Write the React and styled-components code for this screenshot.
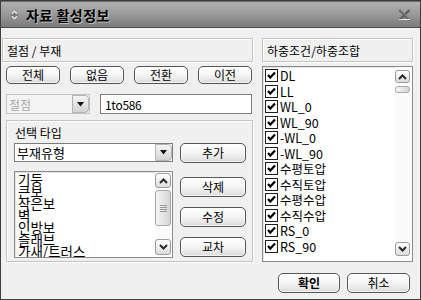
import React from 'react';
import styled, { createGlobalStyle } from 'styled-components';

const Global = createGlobalStyle`
  html, body {
    margin: 0;
    padding: 0;
    background: #f0f0f0;
  }
  body {
    font-family: "Noto Sans CJK KR", "Liberation Sans", sans-serif;
    font-size: 12px;
    color: #000;
  }
`;

const Window = styled.div`
  width: 421px;
  height: 300px;
  box-sizing: border-box;
  border: 1px solid #3e3e3e;
  background: #f0f0f0;
  display: flex;
  flex-direction: column;
  overflow: hidden;
`;

const TitleBar = styled.div`
  height: 27px;
  flex: 0 0 27px;
  box-sizing: border-box;
  border-top: 1px solid #6a6a6a;
  border-bottom: 1px solid #4c4c4c;
  background: linear-gradient(#b0b0b0, #9c9c9c 45%, #868686 80%, #7c7c7c);
  display: flex;
  align-items: center;
  padding: 0 9px 0 9px;
`;

const Title = styled.div`
  margin-left: 7px;
  font-weight: 700;
  font-size: 14px;
  letter-spacing: 0.5px;
  color: #000;
  text-shadow: 1px 1px 0 rgba(255, 255, 255, 0.45);
  flex: 1;
`;

const Body = styled.div`
  flex: 1;
  display: flex;
  padding: 10px 6px 0 1px;
  gap: 9px;
`;

const LeftCol = styled.div`
  width: 251px;
  display: flex;
  flex-direction: column;
`;

const RightCol = styled.div`
  width: 151px;
  display: flex;
  flex-direction: column;
`;

const Header = styled.div`
  height: 24px;
  box-sizing: border-box;
  border: 1px solid #c4c4bc;
  box-shadow: inset 1px 1px 0 #ffffff, 1px 1px 0 #ffffff;
  display: flex;
  align-items: center;
  padding-left: 4px;
  font-size: 12px;
`;

const ButtonRow = styled.div`
  margin-top: 4px;
  display: flex;
  gap: 10px;
  padding-left: 4px;
`;

const Button = styled.button`
  width: ${p => p.$w || 54}px;
  height: ${p => p.$h || 18}px;
  box-sizing: border-box;
  padding: 0;
  border: 1px solid #555;
  border-radius: 5px;
  background: linear-gradient(#ffffff, #f6f6f6 45%, #e6e6e6 80%, #d8d8d8);
  box-shadow: inset 0 0 0 1px rgba(255, 255, 255, 0.7);
  font-family: "Noto Sans CJK KR", "Liberation Sans", sans-serif;
  font-size: 12px;
  font-weight: ${p => (p.$bold ? 700 : 400)};
  color: #000;
  line-height: 1;
  flex: 0 0 auto;
`;

const ComboRow = styled.div`
  margin-top: 10px;
  display: flex;
  padding-left: 4px;
  gap: 10px;
`;

const Combo = styled.div`
  width: ${p => p.$w}px;
  height: ${p => p.$h || 20}px;
  box-sizing: border-box;
  border: 1px solid ${p => (p.$disabled ? '#c4c4c4' : '#7c7c7c')};
  background: ${p => (p.$disabled ? '#f4f4f4' : '#fff')};
  display: flex;
  align-items: stretch;
`;

const ComboText = styled.div`
  flex: 1;
  display: flex;
  align-items: center;
  padding-left: 2px;
  font-size: ${p => p.$size || 12}px;
  color: ${p => (p.$disabled ? '#a8a8a8' : '#000')};
`;

const DropBtn = styled.div`
  width: 17px;
  box-sizing: border-box;
  border: 1px solid #b4b4b4;
  border-radius: 0 4px 4px 0;
  margin: 0;
  background: linear-gradient(#f6f6f6, #e4e4e4 50%, #d2d2d2);
  display: flex;
  align-items: center;
  justify-content: center;
`;

const TextInput = styled.div`
  width: 152px;
  height: 20px;
  box-sizing: border-box;
  border: 1px solid #7c7c7c;
  background: #fff;
  padding-left: 4px;
  display: flex;
  align-items: center;
  font-size: 12px;
  letter-spacing: -0.3px;
`;

const Group = styled.div`
  margin: 6px 0 0 4px;
  width: 247px;
  height: 142px;
  box-sizing: border-box;
  border: 1px solid #c4c4bc;
  box-shadow: inset 1px 1px 0 #ffffff, 1px 1px 0 #ffffff;
  padding: 4px 6px 0 7px;
  display: flex;
  flex-direction: column;
`;

const Legend = styled.div`
  height: 15px;
  line-height: 15px;
  font-size: 12px;
  padding-left: 1px;
`;

const GroupRow = styled.div`
  display: flex;
  gap: 7px;
  margin-top: ${p => p.$mt}px;
  align-items: flex-start;
`;

const SideButtons = styled.div`
  display: flex;
  flex-direction: column;
  gap: 10px;
  padding-top: 6px;
`;

const ListBox = styled.div`
  width: ${p => p.$w}px;
  height: ${p => p.$h}px;
  box-sizing: border-box;
  border: 1px solid #8c8c8c;
  box-shadow: inset 1px 1px 0 #e4e4e4;
  background: #fff;
  display: flex;
  overflow: hidden;
`;

const Items = styled.div`
  flex: 1;
  display: flex;
  flex-direction: column;
  padding: ${p => p.$pad};
  overflow: hidden;
`;

const TightItem = styled.div`
  height: 12px;
  line-height: 12px;
  font-size: 13.5px;
  white-space: nowrap;
`;

const CheckItem = styled.div`
  height: 15.5px;
  display: flex;
  align-items: center;
  gap: 2px;
  font-size: 12.5px;
  white-space: nowrap;
`;

const CheckBox = styled.span`
  width: 13px;
  height: 13px;
  box-sizing: border-box;
  border: 1px solid #1e1e1e;
  background: #fff;
  display: inline-flex;
  align-items: center;
  justify-content: center;
  flex: 0 0 13px;
`;

const ScrollBar = styled.div`
  width: 17px;
  display: flex;
  flex-direction: column;
  padding: ${p => p.$pad};
  box-sizing: border-box;
  background: #fbfbfb;
`;

const ScrollBtn = styled.div`
  height: ${p => p.$h}px;
  box-sizing: border-box;
  border: 1px solid #9c9c9c;
  border-radius: 3px;
  background: linear-gradient(#ffffff, #eeeeee 50%, #dcdcdc);
  display: flex;
  align-items: center;
  justify-content: center;
`;

const Track = styled.div`
  flex: 1;
  display: flex;
  flex-direction: column;
  padding-top: ${p => p.$offset}px;
`;

const Thumb = styled.div`
  height: ${p => p.$h}px;
  box-sizing: border-box;
  border: 1px solid #a8a8a8;
  border-radius: 3px;
  background: linear-gradient(90deg, #f6f6f6, #e2e2e2 60%, #d6d6d6);
  display: flex;
  align-items: center;
  justify-content: center;
`;

const Grip = styled.div`
  width: 7px;
  height: 7px;
  background: repeating-linear-gradient(#9a9a9a 0 1px, transparent 1px 2px);
`;

const Footer = styled.div`
  margin-top: 11px;
  display: flex;
  justify-content: flex-end;
  gap: 7px;
  padding-right: 3px;
`;

const Caret = ({ up }) => (
  <svg width="9" height="6" viewBox="0 0 9 6">
    <path
      d={up ? 'M1 5 L4.5 1.5 L8 5' : 'M1 1 L4.5 4.5 L8 1'}
      fill="none"
      stroke="#2a2a2a"
      strokeWidth="2"
    />
  </svg>
);

const DownTri = () => (
  <svg width="7" height="5" viewBox="0 0 7 5">
    <path d="M0 0 H7 L3.5 4.5 Z" fill="#111" />
  </svg>
);

const Check = () => (
  <svg width="11" height="11" viewBox="0 0 11 11">
    <path d="M2 5 L4.3 7.6 L9 2.6" fill="none" stroke="#000" strokeWidth="2.2" />
  </svg>
);

const TitleIcon = () => (
  <svg width="9" height="12" viewBox="0 0 9 12">
    <path d="M4.5 0.5 L8.5 6 L4.5 11.5 L0.5 6 Z" fill="#7a7a7a" />
    <path d="M2 4.8 L4.5 2.2 L7 4.8" fill="none" stroke="#e8e8e8" strokeWidth="1.3" />
    <path d="M2 7.2 L4.5 9.8 L7 7.2" fill="none" stroke="#e8e8e8" strokeWidth="1.3" />
  </svg>
);

const CloseIcon = () => (
  <svg width="13" height="12" viewBox="0 0 13 12">
    <path d="M1.5 1 L11.5 11 M11.5 1 L1.5 11" stroke="#5e5e5e" strokeWidth="2.4" />
    <path d="M2.5 1 L11.5 10" stroke="#a8a8a8" strokeWidth="0.8" />
    <path d="M1 10.5 H12" stroke="#e6e6e6" strokeWidth="1" />
  </svg>
);

const memberTypes = ['기둥', '큰보', '작은보', '벽', '인방보', '슬래브', '가새/트러스'];
const loadCases = [
  'DL', 'LL', 'WL_0', 'WL_90', '-WL_0', '-WL_90',
  '수평토압', '수직토압', '수평수압', '수직수압', 'RS_0', 'RS_90',
];

export default function App() {
  return (
    <>
      <Global />
      <Window>
        <TitleBar>
          <TitleIcon />
          <Title>자료 활성정보</Title>
          <CloseIcon />
        </TitleBar>
        <Body>
          <LeftCol>
            <Header>절점 / 부재</Header>
            <ButtonRow>
              <Button>전체</Button>
              <Button>없음</Button>
              <Button>전환</Button>
              <Button>이전</Button>
            </ButtonRow>
            <ComboRow>
              <Combo $w={84} $disabled>
                <ComboText $disabled>절점</ComboText>
                <DropBtn><DownTri /></DropBtn>
              </Combo>
              <TextInput>1to586</TextInput>
            </ComboRow>
            <Group>
              <Legend>선택 타입</Legend>
              <GroupRow $mt={3}>
                <Combo $w={159} $h={19}>
                  <ComboText $size={13}>부재유형</ComboText>
                  <DropBtn><DownTri /></DropBtn>
                </Combo>
                <Button $w={66} $h={20}>추가</Button>
              </GroupRow>
              <GroupRow $mt={8}>
                <ListBox $w={159} $h={87}>
                  <Items $pad="1px 0 0 3px">
                    {memberTypes.map(t => (
                      <TightItem key={t}>{t}</TightItem>
                    ))}
                  </Items>
                  <ScrollBar $pad="1px 1px 2px 0">
                    <ScrollBtn $h={15}><Caret up /></ScrollBtn>
                    <Track $offset={2}>
                      <Thumb $h={36}><Grip /></Thumb>
                    </Track>
                    <ScrollBtn $h={16}><Caret /></ScrollBtn>
                  </ScrollBar>
                </ListBox>
                <SideButtons>
                  <Button $w={66} $h={20}>삭제</Button>
                  <Button $w={66} $h={20}>수정</Button>
                  <Button $w={66} $h={20}>교차</Button>
                </SideButtons>
              </GroupRow>
            </Group>
          </LeftCol>
          <RightCol>
            <Header>하중조건/하중조합</Header>
            <ListBox $w={151} $h={196} style={{ marginTop: 4 }}>
              <Items $pad="1px 0 0 2px">
                {loadCases.map(c => (
                  <CheckItem key={c}>
                    <CheckBox><Check /></CheckBox>
                    {c}
                  </CheckItem>
                ))}
              </Items>
              <ScrollBar $pad="3px 2px 5px 0">
                <ScrollBtn $h={13}><Caret up /></ScrollBtn>
                <Track $offset={3}>
                  <Thumb $h={7} />
                </Track>
                <ScrollBtn $h={14}><Caret /></ScrollBtn>
              </ScrollBar>
            </ListBox>
            <Footer>
              <Button $w={62} $h={20} $bold>확인</Button>
              <Button $w={63} $h={20}>취소</Button>
            </Footer>
          </RightCol>
        </Body>
      </Window>
    </>
  );
}
